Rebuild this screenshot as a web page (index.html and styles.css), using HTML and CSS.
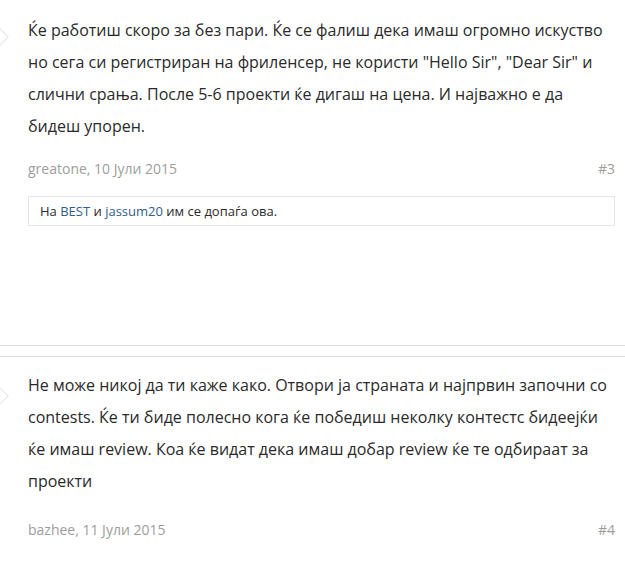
FILE: index.html
```html
<!DOCTYPE html>
<html lang="mk">
<head>
<meta charset="utf-8">
<link rel="stylesheet" href="styles.css">
</head>
<body>
<div class="thread">
  <div class="post post-first">
    <span class="arrow"></span>
    <div class="message">Ќе работиш скоро за без пари. Ќе се фалиш дека имаш огромно искуство но сега си регистриран на фриленсер, не користи "Hello Sir", "Dear Sir" и слични срања. После 5-6 проекти ќе дигаш на цена. И најважно е да бидеш упорен.</div>
    <div class="meta">
      <span class="author">greatone, 10 Јули 2015</span>
      <span class="num">#3</span>
    </div>
    <div class="likes">На <a href="#">BEST</a> и <a href="#">jassum20</a> им се допаѓа ова.</div>
  </div>
  <div class="post post-second">
    <span class="arrow"></span>
    <div class="message">Не може никој да ти каже како. Отвори ја страната и најпрвин започни со contests. Ќе ти биде полесно кога ќе победиш неколку контестс бидеејќи ќе имаш review. Коа ќе видат дека имаш добар review ќе те одбираат за проекти</div>
    <div class="meta">
      <span class="author">bazhee, 11 Јули 2015</span>
      <span class="num">#4</span>
    </div>
  </div>
</div>
</body>
</html>
```
FILE: styles.css
```css
html, body {
  margin: 0;
  padding: 0;
  background: #fff;
}
body {
  font-family: "Open Sans", "Noto Sans", sans-serif;
  color: #2a2a2a;
  overflow: hidden;
}
.thread {
  display: flex;
  flex-direction: column;
}
.post {
  position: relative;
  padding: 14px 10px 0 28px;
}
.post-first {
  border-bottom: 1px solid #dcdcdc;
  padding-bottom: 119px;
}
.post-second {
  margin-top: 10px;
  border-top: 1px solid #dcdcdc;
  padding-top: 12px;
}
.arrow {
  position: absolute;
  left: -8px;
  top: 30px;
  width: 12px;
  height: 12px;
  border: 1px solid #e6e6e6;
  background: #fff;
  transform: rotate(45deg);
}
.post-second .arrow {
  top: 32px;
}
.message {
  font-size: 16px;
  line-height: 32px;
}
.meta {
  display: flex;
  justify-content: space-between;
  margin-top: 17px;
  font-size: 14px;
  line-height: 20px;
  color: #9d9d9d;
}
.post-second .meta {
  margin-top: 23px;
}
.likes {
  margin-top: 17px;
  border: 1px solid #e6e6e6;
  padding: 5px 11px;
  font-size: 13px;
  line-height: 18px;
  color: #2a2a2a;
}
.likes a {
  color: #2f5d8c;
  text-decoration: none;
}
```
